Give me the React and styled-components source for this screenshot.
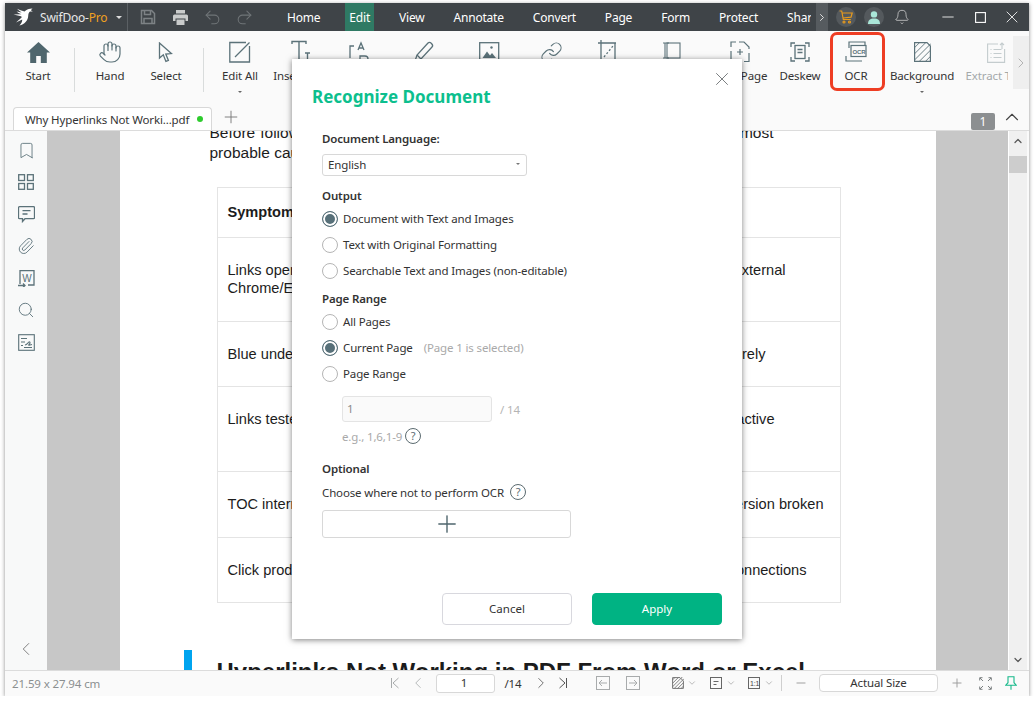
import React from 'react'
import styled, { createGlobalStyle } from 'styled-components'
import { Hand, ChevronRight, ChevronLeft, ChevronDown, ChevronUp, Bell, Search, Paperclip, Bookmark, Undo2, Redo2, Minus, Plus, X, Link } from 'lucide-react'

const Global = createGlobalStyle`
  html, body { margin: 0; padding: 0; background: #fff; }
  body { font-family: "Noto Sans", "Open Sans", sans-serif; color: #333; }
  * { box-sizing: border-box; }
`

const ICON = '#5b7279'

const Window = styled.div`
  position: relative;
  width: 1024px;
  height: 693px;
  margin: 3px 0 0 5px;
  display: flex;
  flex-direction: column;
  background: #fafafa;
  box-shadow: 0 1px 4px rgba(0,0,0,.45);
  overflow: hidden;
`

/* title bar */
const TitleBar = styled.div`
  height: 28px;
  flex: none;
  display: flex;
  align-items: center;
  background: #3f4448;
  color: #fff;
  font-size: 12px;
  letter-spacing: -.2px;
`
const Brand = styled.div`
  width: 123px;
  height: 100%;
  padding-left: 8px;
  display: flex;
  align-items: center;
  color: #e8e8e8;
  font-size: 12px;
  border-right: 1px solid #5b6064;
`
const BrandName = styled.span`
  margin-left: 7px;
  width: 76px;
  b { font-weight: 400; color: #f0a020; }
`
const Caret = styled.i`
  display: inline-block;
  width: 0;
  height: 0;
  border-left: ${p => p.$s || 3}px solid transparent;
  border-right: ${p => p.$s || 3}px solid transparent;
  border-top: ${p => p.$s || 3}px solid ${p => p.$c || '#ddd'};
`
const Slot = styled.div`
  width: ${p => p.$w || 32}px;
  margin-left: ${p => p.$ml || 0}px;
  height: 100%;
  flex: none;
  display: flex;
  align-items: center;
  justify-content: center;
  gap: ${p => p.$gap || 0}px;
  color: ${p => p.$c || 'inherit'};
`
const Menu = styled.nav`
  width: 524px;
  margin-left: 27px;
  height: 100%;
  display: flex;
  align-items: center;
  gap: 29px;
  overflow: hidden;
  flex: none;
`
const MenuItem = styled.span`
  height: 100%;
  display: flex;
  align-items: center;
  flex: none;
  ${p => p.$active && `
    background: #2f7a64;
    padding: 0 4px;
    margin: 0 -4px;
  `}
`
const MoreTabs = styled.div`
  width: 12px;
  height: 100%;
  margin-left: 5px;
  flex: none;
  background: #565b5f;
  display: flex;
  align-items: center;
  justify-content: center;
`
const Round = styled.div`
  width: 20px;
  height: 20px;
  border-radius: 50%;
  margin-left: 8px;
  flex: none;
  background: #54595d;
  display: flex;
  align-items: center;
  justify-content: center;
`

/* ribbon */
const Ribbon = styled.div`
  height: 73px;
  flex: none;
  display: flex;
  background: #fafafa;
`
const Tools = styled.div`
  width: 1003px;
  display: flex;
  overflow: hidden;
  flex: none;
`
const Tool = styled.div`
  position: relative;
  width: ${p => p.$w}px;
  flex: none;
  display: flex;
  flex-direction: column;
  align-items: center;
  padding-top: 9px;
  color: ${p => p.$muted ? '#a4a9aa' : '#333'};
  font-size: 11.5px;
  letter-spacing: -.12px;
`
const ToolIcon = styled.div`
  height: 24px;
  display: flex;
  align-items: center;
  justify-content: center;
`
const ToolLabel = styled.div`
  margin-top: 4px;
  line-height: 16px;
  white-space: nowrap;
`
const ToolCaret = styled.div`
  margin-top: 5px;
  line-height: 0;
`
const Rule = styled.div`
  width: ${p => p.$w}px;
  flex: none;
  display: flex;
  justify-content: center;
  padding: 17px 0 12px;
  &::after { content: ''; width: 1px; background: #d9dcdc; }
`
const Highlight = styled.div`
  position: absolute;
  left: -7px;
  right: -10px;
  top: 1px;
  height: 59px;
  border: 3px solid #ee3d23;
  border-radius: 7px;
`
const RibbonMore = styled.div`
  width: 16px;
  height: 53px;
  margin: 5px 0 0 5px;
  background: #efefef;
  display: flex;
  align-items: center;
  justify-content: center;
`

/* tab row */
const TabRow = styled.div`
  height: 26px;
  flex: none;
  display: flex;
  align-items: flex-end;
  padding-left: 8px;
  background: #fafafa;
`
const Tab = styled.div`
  width: 199px;
  height: 23px;
  flex: none;
  display: flex;
  align-items: center;
  justify-content: space-between;
  padding: 0 8px 0 11px;
  background: #fff;
  border: 1px solid #d8d8d8;
  border-bottom: none;
  border-radius: 4px 4px 0 0;
  font-size: 11.5px;
  letter-spacing: -.14px;
  white-space: nowrap;
`
const Dot = styled.i`
  width: 6px;
  height: 6px;
  border-radius: 50%;
  background: #2ecc2e;
`
const PageBadge = styled.div`
  width: 24px;
  height: 17px;
  margin-left: auto;
  background: #8c8f91;
  border-radius: 2px;
  color: #fff;
  font-size: 12px;
  line-height: 17px;
  text-align: center;
`

/* workspace */
const Workspace = styled.div`
  flex: 1;
  min-height: 0;
  display: flex;
  border-top: 1px solid #dcdcdc;
  border-bottom: 1px solid #dcdcdc;
`
const SideBar = styled.aside`
  width: 42px;
  flex: none;
  display: flex;
  flex-direction: column;
  align-items: center;
  gap: 8px;
  padding-top: 7px;
  background: #f8f9f9;
`
const SideIcon = styled.div`
  width: 24px;
  height: 24px;
  display: flex;
  align-items: center;
  justify-content: center;
`
const SideCollapse = styled.div`
  margin-top: auto;
  padding-bottom: 10px;
  line-height: 0;
`
const Canvas = styled.div`
  flex: 1;
  min-width: 0;
  background: #c7c7c7;
  display: flex;
  justify-content: center;
  overflow: hidden;
`
const Sheet = styled.main`
  width: 816px;
  flex: none;
  margin-top: -8px;
  padding-left: 90px;
  background: #fff;
  color: #1c1c1c;
  font-family: "Liberation Sans", Arial, sans-serif;
`
const Lead = styled.p`
  width: 564px;
  margin: 0;
  font-size: 15.5px;
  line-height: 20px;
  text-align: justify;
`
const Table = styled.div`
  width: 624px;
  margin: 24px 0 0 7px;
  border: 1px solid #e4e4e4;
  font-size: 14.6px;
  line-height: 18px;
`
const Row = styled.div`
  position: relative;
  height: ${p => p.$h}px;
  padding: ${p => p.$head ? 15 : 23}px 10px 0 10px;
  font-weight: ${p => p.$head ? 700 : 400};
  white-space: nowrap;
  & + & { border-top: 1px solid #e4e4e4; }
`
const RowEnd = styled.span`
  float: right;
  margin-right: ${p => p.$inset}px;
`
const Section = styled.div`
  display: flex;
  height: 40px;
  margin: 47px 0 0 -26px;
`
const SectionBar = styled.i`
  width: 8px;
  height: 40px;
  flex: none;
  background: #00a4ef;
`
const SectionTitle = styled.h2`
  margin: 7px 0 0 25px;
  font-size: 24px;
  line-height: 30px;
  font-weight: 700;
  white-space: nowrap;
`
const ScrollTrack = styled.div`
  width: 19px;
  flex: none;
  margin-right: 2px;
  background: #f0f0f0;
  border-left: 1px solid #fff;
  display: flex;
  flex-direction: column;
  align-items: center;
  padding-top: 4px;
`
const ScrollThumb = styled.div`
  width: 100%;
  height: 17px;
  margin-top: 9px;
  background: #cdcdcd;
`
const ScrollEnd = styled.div`
  margin-top: auto;
  padding-bottom: 4px;
  line-height: 0;
`

/* status bar */
const StatusBar = styled.footer`
  height: 25px;
  flex: none;
  display: flex;
  align-items: center;
  padding: 0 0 1px 7px;
  background: #fafafa;
  font-size: 11.5px;
  letter-spacing: -.12px;
`
const SizeText = styled.div`
  width: 373px;
  flex: none;
  color: #8b8f90;
`
const PageInput = styled.div`
  width: 59px;
  height: 19px;
  margin-left: 5px;
  flex: none;
  background: #fff;
  border: 1px solid #d8d8d8;
  border-radius: 3px;
  line-height: 16px;
  text-align: center;
  padding-right: 3px;
`
const VRule = styled.div`
  width: 1px;
  height: 16px;
  margin-left: 5px;
  flex: none;
  background: #cfcfcf;
`
const ZoomBox = styled.div`
  width: 119px;
  height: 18px;
  margin-left: 8px;
  flex: none;
  background: #fff;
  border: 1px solid #d8d8d8;
  border-radius: 4px;
  line-height: 15px;
  text-align: center;
`

/* dialog */
const Dialog = styled.section`
  position: absolute;
  left: 287px;
  top: 56px;
  width: 450px;
  height: 580px;
  display: flex;
  flex-direction: column;
  background: #fff;
  box-shadow: 0 1px 6px rgba(0,0,0,.5);
  font-size: 11.5px;
  letter-spacing: -.14px;
  color: #333;
`
const CloseBtn = styled.div`
  position: absolute;
  right: 9px;
  top: 9px;
  line-height: 0;
`
const DialogTitle = styled.h1`
  margin: 27px 0 0 20px;
  font-size: 17px;
  line-height: 22px;
  font-weight: 700;
  letter-spacing: 0;
  color: #0cbf8e;
`
const Form = styled.div`
  flex: 1;
  padding: 23px 0 0 30px;
  display: flex;
  flex-direction: column;
`
const Heading = styled.div`
  height: 18px;
  line-height: 16px;
  font-weight: 600;
  margin-top: ${p => p.$mt || 0}px;
`
const Select = styled.div`
  width: 205px;
  height: 22px;
  margin-top: 5px;
  padding: 0 6px 2px 5px;
  border: 1px solid #d8d8d8;
  border-radius: 3px;
  display: flex;
  align-items: center;
  justify-content: space-between;
`
const RadioRow = styled.div`
  height: 26px;
  display: flex;
  align-items: center;
  gap: 5px;
  span { margin-bottom: 2px; }
  span span { margin-bottom: 0; }
`
const RadioDot = styled.i`
  width: 16px;
  height: 16px;
  flex: none;
  border-radius: 50%;
  background: ${p => p.$on ? '#577079' : '#fff'};
  border: 1.5px solid ${p => p.$on ? '#577079' : '#b5b5b5'};
  box-shadow: ${p => p.$on ? 'inset 0 0 0 2px #fff' : 'none'};
`
const Note = styled.span`
  margin-left: 11px;
  color: #a9a9a9;
`
const RangeRow = styled.div`
  display: flex;
  align-items: center;
  gap: 8px;
  margin: 9px 0 0 20px;
  color: #b4b4b4;
`
const RangeInput = styled.div`
  width: 150px;
  height: 26px;
  padding: 0 4px;
  background: #fafafa;
  border: 1px solid #e4e4e4;
  border-radius: 3px;
  line-height: 23px;
  color: #8a8a8a;
`
const Hint = styled.div`
  display: flex;
  align-items: center;
  gap: 3px;
  height: 16px;
  margin: 6px 0 0 20px;
  color: #a9a9a9;
`
const Help = styled.i`
  width: 16px;
  height: 16px;
  flex: none;
  border: 1px solid #5b6b70;
  border-radius: 50%;
  font-style: normal;
  font-size: 11px;
  line-height: 14px;
  text-align: center;
  color: #5b6b70;
`
const HelpRow = styled.div`
  display: flex;
  align-items: center;
  gap: 6px;
  height: 18px;
  margin-top: 4px;
`
const AddArea = styled.div`
  width: 249px;
  height: 28px;
  margin-top: 9px;
  border: 1px solid #d8d8d8;
  border-radius: 3px;
  display: flex;
  align-items: center;
  justify-content: center;
`
const Actions = styled.div`
  display: flex;
  justify-content: flex-end;
  gap: 20px;
  padding: 0 20px 14px 0;
`
const Btn = styled.button`
  width: 130px;
  height: 32px;
  padding: 0 0 2px;
  border-radius: 4px;
  border: 1px solid ${p => p.$primary ? '#00b383' : '#d8d8de'};
  background: ${p => p.$primary ? '#00b383' : '#fff'};
  color: ${p => p.$primary ? '#fff' : '#333'};
  font: inherit;
`

const Svg = ({ w = 24, h = 24, vb, children, c = ICON, sw = 1.3 }) => (
  <svg width={w} height={h} viewBox={vb || `0 0 ${w} ${h}`} fill="none" stroke={c} strokeWidth={sw}>{children}</svg>
)

const Logo = () => (
  <svg width="20" height="18" viewBox="0 0 20 18" fill="#fff">
    <path d="M19.5 .5C16 .6 13.5 1.6 11.5 3.6 9.6 3 7.3 2.2 4 .8 5.4 2.4 7 3.6 8.7 4.5L3.6 3.6C5.2 5 6.9 5.8 8.4 6.2L.5 6.4 8 8.2C8.6 8.6 8.8 9 8.6 9.6L3 14.5 9.2 11.6C9.4 13.6 8.4 15.6 6.4 17.5 11.5 16.4 15 12.4 15.2 8 15.3 6 15.8 4.6 17 3.6L19.8 3.4 17.8 2.2z" />
  </svg>
)
const SaveIcon = () => (
  <Svg w={16} h={16} c="#7d8285" sw={1.5}>
    <path d="M1.5 1.5h10l3 3v10h-13z" /><path d="M4.5 1.5v4h6v-4M4 14.5v-5h8v5" />
  </Svg>
)
const PrintIcon = () => (
  <svg width="15" height="15" viewBox="0 0 15 15" fill="#c9cbcb">
    <path d="M3 0h9v3.5H3zM1.5 4.5h12A1.500 1.500 0 0 1 15 6v5h-2.500V8.500h-10V11H0V6a1.500 1.500 0 0 1 1.500-1.500z" />
    <path d="M3.500 9.500h8V15h-8z" />
  </svg>
)
const HomeIcon = () => (
  <svg width="23" height="21" viewBox="0 0 23 21" fill="#4f666d">
    <path d="M11.5 0 0 10.5h3.2V21h6v-7h4.600v7h6V10.500H23z" />
  </svg>
)
const PointerIcon = () => (
  <Svg w={16} h={21}><path d="M1.5 1v15l3.800-3.200 2.600 6.600 2.500-1-2.600-6.300 5.600-.5z" /></Svg>
)
const EditAllIcon = () => (
  <Svg w={22} h={22}><path d="M20.5 5v16H.8V1.500H17" /><path d="M6 16 20.500 1.500" /></Svg>
)
const TextIcon = () => (
  <Svg w={22} h={24} sw={1.4}><path d="M2 4V1.500h14V4M9 1.500V22" /><path d="M15 13h5M17.500 13v6" /></Svg>
)
const AbIcon = () => (
  <Svg w={24} h={24}><path d="M6 6H2v12M10 10l3-7 3 7M11 8h4M12 16v6h5a2 2 0 0 0 0-6z" /></Svg>
)
const MarkerIcon = () => (
  <Svg w={24} h={24}><path d="M3 21l2-6L16 3c2-2 6 2 4 4L9 19z" /><path d="M5 15l4 4" /></Svg>
)
const ImageIcon = () => (
  <Svg w={22} h={24}>
    <rect x=".7" y="2.700" width="19" height="20" />
    <circle cx="12.500" cy="7.500" r="1.200" fill={ICON} stroke="none" />
    <path d="M3.500 18 8 11.500l3 4 2-2.500 4 5z" fill={ICON} stroke="none" />
  </Svg>
)
const CropIcon = () => (
  <Svg w={20} h={24}><path d="M0 3h18M3 0v23M3 3h14v20" /><path d="M6 17 15 6" strokeDasharray="2 2" /></Svg>
)
const PanelIcon = () => (
  <Svg w={20} h={24} sw={1.1}><rect x="5" y="3" width="13" height="15" /><path d="M1 3h6M1 18h6M3 3v15" /></Svg>
)
const CropPageIcon = () => (
  <Svg w={20} h={22} vb="0 0 20 22" sw={1.2}>
    <path d="M1 6V1h5M9 1h5l5 5v2M19 12v8.500h-5M10 20.500H6M3.500 20.500H1V10" />
    <path d="M7 11h6M10 8v6" />
  </Svg>
)
const DeskewIcon = () => (
  <Svg w={20} h={20}>
    <path d="M1 5V1h4M15 1h4v4M1 15v4h4M15 19h4v-4" />
    <rect x="5" y="3.500" width="10" height="13" />
    <path d="M7.500 7.500h5M7.500 10.500h5" />
  </Svg>
)
const OcrIcon = () => (
  <svg width="22" height="22" viewBox="0 0 22 22" fill="none" stroke={ICON} strokeWidth="1.2">
    <path d="M20 4V1H4v6M1 15v5h16" />
    <rect x="6" y="4.500" width="15" height="11" />
    <text x="7.400" y="12.600" fontSize="6" fontWeight="700" fill={ICON} stroke="none" fontFamily="Liberation Sans">OCR</text>
  </svg>
)
const HatchIcon = ({ w = 17, h = 20, c = ICON, sw = 1.2, lines = 5 }) => (
  <Svg w={w} h={h} c={c} sw={sw}>
    <path d={`M.6 .6H${w - 4}L${w - .6} 4V${h - .6}H.6z`} />
    {Array.from({ length: lines }, (_, i) => {
      const t = ((i + 1) * (w + h)) / (lines + 1)
      return <line key={i} x1={Math.max(0, t - h)} y1={Math.min(h, t)} x2={Math.min(w, t)} y2={Math.max(0, t - w)} strokeWidth=".9" />
    })}
  </Svg>
)
const ExtractIcon = () => (
  <Svg w={19} h={21} c="#c4ccce" sw={1.1}>
    <path d="M11 2H.6v18.400h17V7M3.500 7.500h1M6.500 7.500h8M3.500 11.500h1M6.500 11.500h8M3.500 15.500h1M6.500 15.500h8M15 7V1M13 3l2-2 2 2" />
  </Svg>
)
const GridIcon = () => (
  <Svg w={16} h={16}>
    <rect x=".7" y=".7" width="5.800" height="5.800" /><rect x="9.500" y=".7" width="5.800" height="5.800" />
    <rect x=".7" y="9.500" width="5.800" height="5.800" /><rect x="9.500" y="9.500" width="5.800" height="5.800" />
  </Svg>
)
const CommentIcon = () => (
  <Svg w={17} h={17}><path d="M1.500 .7h14a1 1 0 0 1 1 1v10a1 1 0 0 1-1 1H7L4.500 15.500V12.700h-3a1 1 0 0 1-1-1v-10a1 1 0 0 1 1-1z" /><path d="M4.500 4.700h8M4.500 8h5" /></Svg>
)
const WordIcon = () => (
  <Svg w={17} h={17}>
    <path d="M2 14V.7h14V15h-6" />
    <text x="4.300" y="11.500" fontSize="10" fill={ICON} stroke="none" fontFamily="Liberation Sans">W</text>
    <path d="M0 15.500h7M5 13.500l2 2-2 2" />
  </Svg>
)
const SignIcon = () => (
  <Svg w={17} h={17} sw={1.1}>
    <rect x=".7" y=".7" width="15.600" height="15.600" />
    <path d="M3 4.500h6M3 8h4M3 11.500h2M6 13.500h8" />
    <path d="M7 11c2-.5 3-2.500 4-3s1.500 1 .5 2-1.500 1.500 .5 1l2-.5" />
  </Svg>
)
const CartIcon = () => (
  <Svg w={14} h={14} c="#e79a1d" sw={1.2}>
    <path d="M.5 1h2.200l1.600 8.500h7.500M3.200 3h10l-1.200 4.200-8 .8" /><circle cx="5" cy="12" r="1" /><circle cx="10.500" cy="12" r="1" />
  </Svg>
)
const UserIcon = () => (
  <svg width="12" height="13" viewBox="0 0 12 13" fill="#a9e6d8">
    <circle cx="6" cy="3.400" r="3.200" /><path d="M0 13c0-3.600 2.200-5.400 6-5.400s6 1.800 6 5.400z" />
  </svg>
)
const MaxIcon = () => (
  <Svg w={11} h={11} c="#fff" sw={1.1}><rect x=".6" y=".6" width="9.800" height="9.800" /></Svg>
)
const FirstIcon = () => (
  <Svg w={10} h={12} c="#a8abac" sw={1}><path d="M1.500 1v10M8.500 1 3 6l5.500 5" /></Svg>
)
const LastIcon = () => (
  <Svg w={10} h={12} c="#555" sw={1}><path d="M8.500 1v10M1.500 1 7 6l-5.500 5" /></Svg>
)
const BoxArrow = ({ flip }) => (
  <Svg w={14} h={14} c="#a8abac" sw={1}>
    <rect x=".5" y=".5" width="13" height="13" />
    <path d={flip ? 'M3 7h8M8 4l3 3-3 3' : 'M11 7H3M6 4 3 7l3 3'} />
  </Svg>
)
const ColumnIcon = () => (
  <Svg w={12} h={12} c="#666" sw={1}><rect x=".5" y=".5" width="11" height="11" /><path d="M3.500 4.500h5M3.500 7.500h3" /></Svg>
)
const ActualIcon = () => (
  <Svg w={12} h={12} c="#666" sw={1}>
    <rect x=".5" y=".5" width="11" height="11" />
    <text x="2" y="8.600" fontSize="7" fill="#444" stroke="none" fontFamily="Liberation Sans">1:1</text>
  </Svg>
)
const FitIcon = () => (
  <Svg w={13} h={13} c="#7a7f80" sw={1}>
    <path d="M.7 3.500V.7h2.800M9.500 .7h2.800v2.800M.7 9.500v2.800h2.800M12.300 9.500v2.800H9.500M1 1l3 3M12 1 9 4M1 12l3-3M12 12 9 9" />
  </Svg>
)
const PinIcon = () => (
  <Svg w={12} h={14} c="#17b98a" sw={1.1}><path d="M3 .7h6v6l2.200 2.500H.8L3 6.700zM6 9.200v4.500" /></Svg>
)
const SmallChevron = () => <ChevronDown size={10} color="#9a9a9a" strokeWidth={1.6} />

const tools = [
  { w: 66, label: 'Start', icon: <HomeIcon /> },
  { rule: 6 },
  { w: 66, label: 'Hand', icon: <Hand size={24} color={ICON} strokeWidth={1.2} /> },
  { w: 46, label: 'Select', icon: <PointerIcon /> },
  { rule: 28 },
  { w: 46, label: 'Edit All', icon: <EditAllIcon />, caret: true },
  { w: 76, label: 'Insert Text', icon: <TextIcon /> },
  { w: 42, label: 'Replace', icon: <AbIcon /> },
  { w: 86, label: 'Highlight', icon: <MarkerIcon /> },
  { w: 46, label: 'Image', icon: <ImageIcon /> },
  { w: 76, label: 'Link', icon: <Link size={23} color={ICON} strokeWidth={1.2} /> },
  { w: 38, label: 'Crop', icon: <CropIcon /> },
  { w: 90, label: 'Margins', icon: <PanelIcon /> },
  { w: 46, label: 'Crop Page', icon: <CropPageIcon /> },
  { w: 74, label: 'Deskew', icon: <DeskewIcon /> },
  { w: 38, label: 'OCR', icon: <OcrIcon />, marked: true },
  { w: 94, label: 'Background', icon: <HatchIcon />, caret: true },
  { w: 54, label: 'Extract Text', icon: <ExtractIcon />, muted: true },
]

const menu = ['Home', 'Edit', 'View', 'Annotate', 'Convert', 'Page', 'Form', 'Protect', 'Share']

const rows = [
  { h: 49, head: true, left: 'Symptom', right: '', inset: 0 },
  { h: 84, left: 'Links open in an internal viewer', left2: 'Chrome/Edge', right: 'Opens in an external', inset: 44 },
  { h: 65, left: 'Blue underlined text not clickable', right: 'Flattened entirely', inset: 64 },
  { h: 85, left: 'Links tested in another reader', right: 'Annotations inactive', inset: 55 },
  { h: 66, left: 'TOC internal links jump wrong', right: 'Bookmark conversion broken', inset: 6 },
  { h: 65, left: 'Click produces a security warning', right: 'Blocked external connections', inset: 23 },
]

const Radio = ({ on, children }) => (
  <RadioRow><RadioDot $on={on} /><span>{children}</span></RadioRow>
)

export default function App() {
  return (
    <>
      <Global />
      <Window>
        <TitleBar>
          <Brand>
            <Logo />
            <BrandName>SwifDoo-<b>Pro</b></BrandName>
            <Caret $s={3} />
          </Brand>
          <Slot $ml={4}><SaveIcon /></Slot>
          <Slot><PrintIcon /></Slot>
          <Slot><Undo2 size={19} color="#6f7477" strokeWidth={1.3} /></Slot>
          <Slot><Redo2 size={19} color="#6f7477" strokeWidth={1.3} /></Slot>
          <Menu>
            {menu.map(m => <MenuItem key={m} $active={m === 'Edit'}>{m}</MenuItem>)}
          </Menu>
          <MoreTabs><ChevronRight size={13} color="#ddd" /></MoreTabs>
          <Round><CartIcon /></Round>
          <Round><UserIcon /></Round>
          <Slot $w={20} $ml={8}><Bell size={16} color="#d8d8d8" strokeWidth={1.1} /></Slot>
          <Slot $ml={20}><Minus size={18} color="#fff" strokeWidth={1.1} /></Slot>
          <Slot><MaxIcon /></Slot>
          <Slot><X size={20} color="#fff" strokeWidth={1} /></Slot>
        </TitleBar>

        <Ribbon>
          <Tools>
            {tools.map((t, i) => t.rule
              ? <Rule key={i} $w={t.rule} />
              : (
                <Tool key={t.label} $w={t.w} $muted={t.muted}>
                  <ToolIcon>{t.icon}</ToolIcon>
                  <ToolLabel>{t.label}</ToolLabel>
                  {t.caret && <ToolCaret><Caret $s={2.5} $c="#666" /></ToolCaret>}
                  {t.marked && <Highlight />}
                </Tool>
              ))}
          </Tools>
          <RibbonMore><ChevronRight size={16} color="#a9a9a9" strokeWidth={1.3} /></RibbonMore>
        </Ribbon>

        <TabRow>
          <Tab>Why Hyperlinks Not Worki...pdf<Dot /></Tab>
          <Slot $w={38} $c="#777"><Plus size={20} strokeWidth={1.1} /></Slot>
          <PageBadge>1</PageBadge>
          <Slot $w={34}><ChevronUp size={22} color="#444" strokeWidth={1.2} /></Slot>
        </TabRow>

        <Workspace>
          <SideBar>
            <SideIcon><Bookmark size={19} color={ICON} strokeWidth={1.1} /></SideIcon>
            <SideIcon><GridIcon /></SideIcon>
            <SideIcon><CommentIcon /></SideIcon>
            <SideIcon><Paperclip size={18} color={ICON} strokeWidth={1.2} /></SideIcon>
            <SideIcon><WordIcon /></SideIcon>
            <SideIcon><Search size={18} color={ICON} strokeWidth={1.2} /></SideIcon>
            <SideIcon><SignIcon /></SideIcon>
            <SideCollapse><ChevronLeft size={22} color="#777" strokeWidth={1} /></SideCollapse>
          </SideBar>
          <Canvas>
            <Sheet>
              <Lead>Before following the fixes below, use the table to identify your issue and the most probable cause of the problem.</Lead>
              <Table>
                {rows.map(r => (
                  <Row key={r.left} $h={r.h} $head={r.head}>
                    <RowEnd $inset={r.inset}>{r.right}</RowEnd>
                    {r.left}
                    {r.left2 && <><br />{r.left2}</>}
                  </Row>
                ))}
              </Table>
              <Section>
                <SectionBar />
                <SectionTitle>Hyperlinks Not Working in PDF From Word or Excel</SectionTitle>
              </Section>
            </Sheet>
          </Canvas>
          <ScrollTrack>
            <ChevronUp size={12} color="#555" strokeWidth={2.4} />
            <ScrollThumb />
            <ScrollEnd><ChevronDown size={12} color="#555" strokeWidth={2.4} /></ScrollEnd>
          </ScrollTrack>
        </Workspace>

        <StatusBar>
          <SizeText>21.59 x 27.94 cm</SizeText>
          <Slot $w={20}><FirstIcon /></Slot>
          <Slot $w={26}><ChevronLeft size={18} color="#a8abac" strokeWidth={1.1} /></Slot>
          <PageInput>1</PageInput>
          <Slot $w={36}>/14</Slot>
          <Slot $w={20}><ChevronRight size={18} color="#555" strokeWidth={1.1} /></Slot>
          <Slot $w={24}><LastIcon /></Slot>
          <Slot $w={30} $ml={13}><BoxArrow /></Slot>
          <Slot $w={30}><BoxArrow flip /></Slot>
          <Slot $w={32} $ml={20} $gap={3}><HatchIcon w={12} h={12} c="#777" sw={1} lines={6} /><SmallChevron /></Slot>
          <Slot $w={30} $ml={8} $gap={4}><ColumnIcon /><SmallChevron /></Slot>
          <Slot $w={30} $ml={8} $gap={4}><ActualIcon /><SmallChevron /></Slot>
          <VRule />
          <Slot $w={20} $ml={9}><Minus size={14} color="#9a9a9a" strokeWidth={1.6} /></Slot>
          <ZoomBox>Actual Size</ZoomBox>
          <Slot $w={20} $ml={9}><Plus size={14} color="#9a9a9a" strokeWidth={1.6} /></Slot>
          <Slot $w={20} $ml={8}><FitIcon /></Slot>
          <Slot $w={20} $ml={6}><PinIcon /></Slot>
        </StatusBar>

        <Dialog>
          <CloseBtn><X size={22} color="#5f6466" strokeWidth={.9} /></CloseBtn>
          <DialogTitle>Recognize Document</DialogTitle>
          <Form>
            <Heading>Document Language:</Heading>
            <Select>English<Caret $s={2.5} $c="#777" /></Select>
            <Heading $mt={12}>Output</Heading>
            <Radio on>Document with Text and Images</Radio>
            <Radio>Text with Original Formatting</Radio>
            <Radio>Searchable Text and Images (non-editable)</Radio>
            <Heading $mt={7}>Page Range</Heading>
            <Radio>All Pages</Radio>
            <Radio on>Current Page<Note>(Page 1 is selected)</Note></Radio>
            <Radio>Page Range</Radio>
            <RangeRow>
              <RangeInput>1</RangeInput>/ 14
            </RangeRow>
            <Hint>e.g., 1,6,1-9<Help>?</Help></Hint>
            <Heading $mt={17}>Optional</Heading>
            <HelpRow>Choose where not to perform OCR<Help>?</Help></HelpRow>
            <AddArea><Plus size={28} color="#4f666d" strokeWidth={1.2} /></AddArea>
          </Form>
          <Actions>
            <Btn>Cancel</Btn>
            <Btn $primary>Apply</Btn>
          </Actions>
        </Dialog>
      </Window>
    </>
  )
}
